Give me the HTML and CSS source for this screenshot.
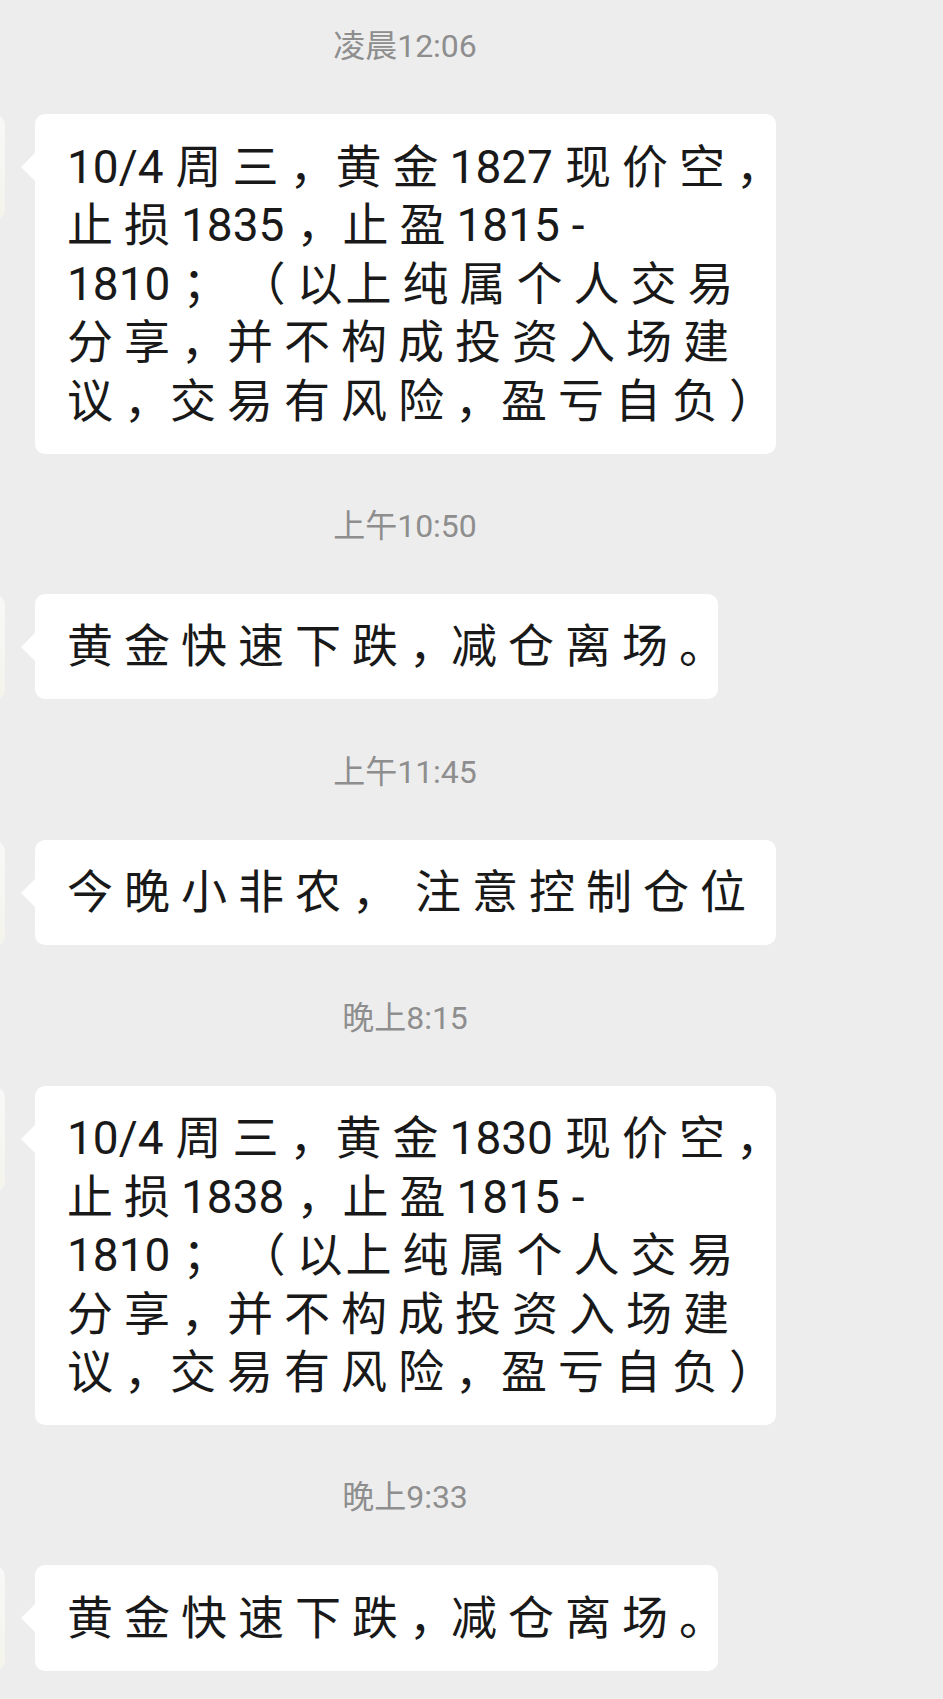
FILE: index.html
```html
<!DOCTYPE html>
<html lang="zh-CN">
<head>
    <meta charset="UTF-8">
    <meta name="viewport" content="width=device-width, initial-scale=1.0">
    <title>聊天记录</title>
    <link rel="stylesheet" href="styles.css">
</head>
<body>
    <div class="chat">
        <div class="time">凌晨12:06</div>
        <div class="row">
            <div class="avatar"></div>
            <div class="bubble">
                <span class="num">10/4</span>周三<span class="c">，</span>黄金<span class="num">1827</span>现价空，<br>
                止损<span class="num">1835</span><span class="c">，</span>止盈<span class="num">1815</span>-<br>
                <span class="num">1810</span>；（<span class="tight">以</span>上纯属个人交易<br>
                分享<span class="c">，</span>并不构成投资入场建<br>
                议<span class="c">，</span>交易有风险<span class="c">，</span>盈亏自负）
            </div>
        </div>

        <div class="time">上午10:50</div>
        <div class="row">
            <div class="avatar"></div>
            <div class="bubble short">黄金快速下跌<span class="c-tight">，</span>减仓离场。</div>
        </div>

        <div class="time">上午11:45</div>
        <div class="row">
            <div class="avatar"></div>
            <div class="bubble">今晚小非农<span class="c-wide">，</span>注意控制仓位</div>
        </div>

        <div class="time">晚上8:15</div>
        <div class="row">
            <div class="avatar"></div>
            <div class="bubble">
                <span class="num">10/4</span>周三<span class="c">，</span>黄金<span class="num">1830</span>现价空，<br>
                止损<span class="num">1838</span><span class="c">，</span>止盈<span class="num">1815</span>-<br>
                <span class="num">1810</span>；（<span class="tight">以</span>上纯属个人交易<br>
                分享<span class="c">，</span>并不构成投资入场建<br>
                议<span class="c">，</span>交易有风险<span class="c">，</span>盈亏自负）
            </div>
        </div>

        <div class="time">晚上9:33</div>
        <div class="row">
            <div class="avatar"></div>
            <div class="bubble short">黄金快速下跌<span class="c-tight">，</span>减仓离场。</div>
        </div>
    </div>
</body>
</html>
```

FILE: styles.css
```css
* {
    margin: 0;
    padding: 0;
    box-sizing: border-box;
}

body {
    background-color: #ededed;
    font-family: Roboto, "Noto Sans CJK SC", sans-serif;
    color: #191919;
}

.chat {
    padding: 26px 133px 30px 0;
}

.time {
    text-align: center;
    font-size: 32px;
    line-height: 40px;
    color: #8e8e8e;
    margin-bottom: 48px;
}

.row {
    display: flex;
    align-items: flex-start;
    margin-bottom: 52px;
}

.row:last-child {
    margin-bottom: 0;
}

/* only the right edge of the avatar shows */
.avatar {
    flex-shrink: 0;
    width: 105px;
    height: 105px;
    margin: 1px 30px 0 -100px;
    border-radius: 10px;
    background: linear-gradient(#f8f8f8, #f4f4ec);
}

.bubble {
    position: relative;
    flex-shrink: 0;
    width: 741px;
    padding: 23.5px 0 23.5px 32px;
    background-color: #fff;
    border-radius: 10px;
    font-size: 46px;
    line-height: 58.5px;
    letter-spacing: 11px;
    white-space: nowrap;
    text-spacing-trim: space-all;
}

.bubble.short {
    width: 683px;
}

.bubble::before {
    content: "";
    position: absolute;
    top: 39px;
    left: -14px;
    border-style: solid;
    border-width: 14px 14px 14px 0;
    border-color: transparent #fff transparent transparent;
}

.num {
    letter-spacing: 0;
    margin-right: 12px;
}

.tight {
    letter-spacing: 3px;
}

.c {
    letter-spacing: 0;
}

.c-tight {
    letter-spacing: -4px;
}

.c-wide {
    letter-spacing: 17px;
}
```
